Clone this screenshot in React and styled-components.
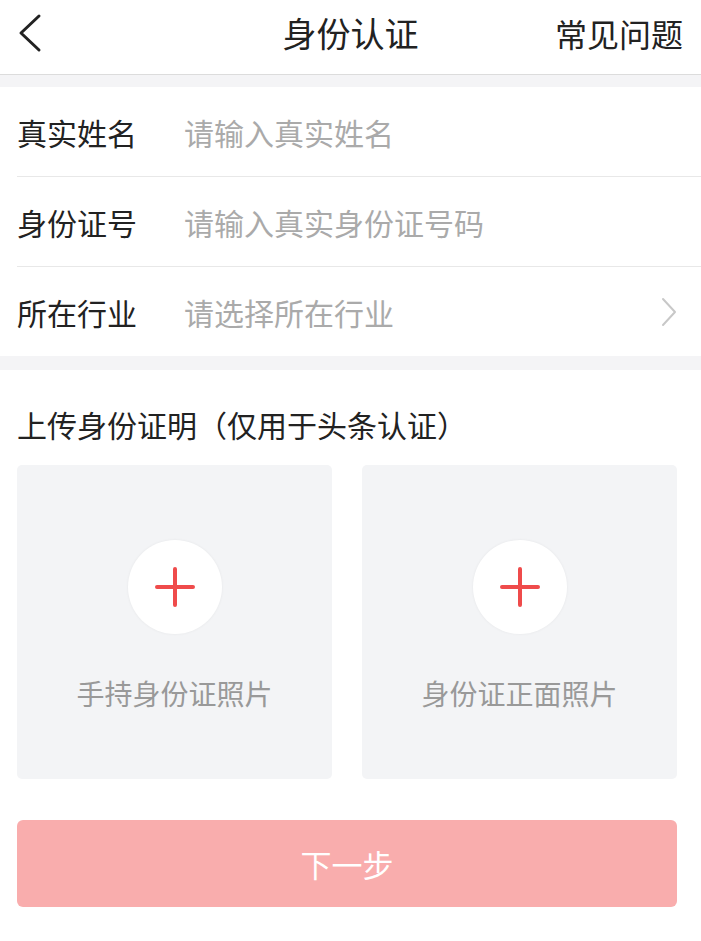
import React from "react";
import styled, { createGlobalStyle } from "styled-components";

const Global = createGlobalStyle`
  body {
    margin: 0;
    background: #fff;
    font-family: "Noto Sans CJK SC", "Noto Sans", sans-serif;
  }
`;

const Page = styled.div`
  width: 701px;
  min-height: 941px;
  background: #fff;
`;

const Header = styled.div`
  height: 74px;
  display: flex;
  align-items: center;
  justify-content: space-between;
  padding: 0 18px 8px;
  border-bottom: 1px solid #dcdcdc;
  box-sizing: border-box;
  height: 75px;
  position: relative;
`;

const Back = styled.div`
  width: 40px;
  display: flex;
  align-items: center;
`;

const Title = styled.div`
  position: absolute;
  left: 0;
  right: 0;
  top: 8px;
  text-align: center;
  font-size: 34px;
  line-height: 50px;
  color: #222;
  pointer-events: none;
`;

const Help = styled.div`
  font-size: 32px;
  color: #222;
`;

const Gap = styled.div`
  height: ${(p) => p.h}px;
  background: #f4f4f6;
`;

const Form = styled.div`
  padding-left: 17px;
`;

const Row = styled.div`
  height: 89px;
  display: flex;
  align-items: center;
  border-bottom: ${(p) => (p.last ? "none" : "1px solid #e8e8e8")};
  padding-right: 24px;
`;

const Label = styled.div`
  width: 167px;
  font-size: 30px;
  color: #222;
`;

const Placeholder = styled.div`
  flex: 1;
  font-size: 30px;
  color: #aaa;
`;

const Section = styled.div`
  padding: 34px 24px 0 17px;
`;

const SectionTitle = styled.div`
  font-size: 30px;
  color: #222;
  height: 40px;
  line-height: 40px;
`;

const Cards = styled.div`
  display: grid;
  grid-template-columns: 315px 315px;
  column-gap: 30px;
  margin-top: 21px;
`;

const Card = styled.div`
  height: 314px;
  background: #f3f4f6;
  border-radius: 5px;
  display: flex;
  flex-direction: column;
  align-items: center;
  padding-top: 75px;
  box-sizing: border-box;
`;

const Circle = styled.div`
  width: 94px;
  height: 94px;
  border-radius: 50%;
  background: #fff;
  box-shadow: 0 0 3px rgba(0, 0, 0, 0.06);
  display: flex;
  align-items: center;
  justify-content: center;
`;

const CardLabel = styled.div`
  margin-top: 39px;
  font-size: 28px;
  color: #999;
`;

const Button = styled.div`
  margin: 41px 24px 0 17px;
  height: 87px;
  border-radius: 6px;
  background: #f9adad;
  color: #fff;
  font-size: 31px;
  display: flex;
  align-items: center;
  justify-content: center;
`;

function Plus() {
  return (
    <svg width="40" height="40" viewBox="0 0 40 40">
      <path d="M20 2v36M2 20h36" stroke="#ef4b4b" strokeWidth="4" strokeLinecap="round" />
    </svg>
  );
}

export default function App() {
  return (
    <Page>
      <Global />
      <Header>
        <Back>
          <svg width="24" height="40" viewBox="0 0 24 40">
            <path d="M21 3L3 20l18 17" fill="none" stroke="#222" strokeWidth="3" strokeLinecap="round" strokeLinejoin="round" />
          </svg>
        </Back>
        <Title>身份认证</Title>
        <Help>常见问题</Help>
      </Header>
      <Gap h={12} />
      <Form>
        <Row>
          <Label>真实姓名</Label>
          <Placeholder>请输入真实姓名</Placeholder>
        </Row>
        <Row>
          <Label>身份证号</Label>
          <Placeholder>请输入真实身份证号码</Placeholder>
        </Row>
        <Row last>
          <Label>所在行业</Label>
          <Placeholder>请选择所在行业</Placeholder>
          <svg width="16" height="30" viewBox="0 0 16 30">
            <path d="M2 2l12 13L2 28" fill="none" stroke="#c8c8c8" strokeWidth="2" strokeLinecap="round" strokeLinejoin="round" />
          </svg>
        </Row>
      </Form>
      <Gap h={14} />
      <Section>
        <SectionTitle>上传身份证明（仅用于头条认证）</SectionTitle>
        <Cards>
          <Card>
            <Circle><Plus /></Circle>
            <CardLabel>手持身份证照片</CardLabel>
          </Card>
          <Card>
            <Circle><Plus /></Circle>
            <CardLabel>身份证正面照片</CardLabel>
          </Card>
        </Cards>
      </Section>
      <Button>下一步</Button>
    </Page>
  );
}
